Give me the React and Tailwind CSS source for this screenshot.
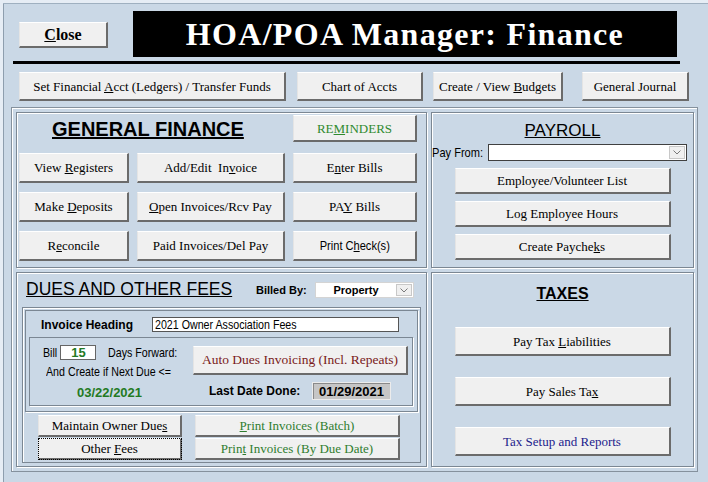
import React from "react";

const serif = "font-['Liberation_Serif','Times_New_Roman',serif]";
const sans = "font-['Liberation_Sans',Arial,sans-serif]";
const panel = "border border-[#7b8793] shadow-[inset_1px_1px_0_#fff,1px_1px_0_#fff]";

function U({ children }) {
  return <span className="underline">{children}</span>;
}

// Arial Narrow look: regular sans squeezed horizontally
function N({ className = "", children }) {
  return (
    <span className={`inline-block whitespace-nowrap scale-x-[0.82] ${className}`}>{children}</span>
  );
}

function Btn({ className = "", size = "text-[13px]", font = serif, children }) {
  return (
    <div
      className={`flex items-center justify-center whitespace-nowrap leading-none bg-[#f0f0f0] border-t border-l border-t-white border-l-[#e4e4e4] border-r-2 border-b-2 border-r-[#6b6b6b] border-b-[#6b6b6b] ${font} ${size} ${className}`}
    >
      <span>{children}</span>
    </div>
  );
}

function Select({ className = "", children }) {
  return (
    <div className={`flex shrink-0 bg-white border ${className}`}>
      <div className="flex-1 flex items-center justify-center leading-none">{children}</div>
      <div className="w-[16px] my-[1px] mr-[1px] flex items-center justify-center bg-[#f0f0f0] border border-[#c8c8c8]">
        <svg width="8" height="5" viewBox="0 0 8 5">
          <path d="M0.5 0.5 L4 4 L7.5 0.5" fill="none" stroke="#7a7a7a" strokeWidth="1" />
        </svg>
      </div>
    </div>
  );
}

export default function App() {
  return (
    <div className={`w-[708px] h-[482px] overflow-hidden bg-[#cad8e6] text-black ${sans} shadow-[inset_0_3px_0_#e6edf5,inset_3px_0_0_#e6edf5,inset_0_4px_0_#9fb0c0,inset_4px_0_0_#8e9eae]`}>
      {/* header */}
      <div className="flex items-start pt-[11px] pl-[19px]">
        <Btn className="mt-[11px] w-[89px] h-[26px] font-bold" size="text-[16px]">
          <U>C</U>lose
        </Btn>
        <div
          className={`ml-[25px] w-[544px] h-[46px] bg-black flex items-center justify-center text-white font-bold text-[32px] tracking-[1.3px] ${serif}`}
        >
          HOA/POA Manager: Finance
        </div>
      </div>
      <div className="ml-[13px] mt-[4px] w-[667px] h-[3px] bg-black" />

      <div className="flex mt-[8px] pl-[19px] h-[29px]">
        <Btn className="w-[267px]">
          Set Financial <U>A</U>cct (Ledgers) / Transfer Funds
        </Btn>
        <Btn className="ml-[11px] w-[126px]">Chart of Accts</Btn>
        <Btn className="ml-[10px] w-[130px]">
          Create / View <U>B</U>udgets
        </Btn>
        <Btn className="ml-[19px] w-[107px]">General Journal</Btn>
      </div>

      {/* main frame */}
      <div className="ml-[11px] mt-[6px] w-[687px] h-[365px] border border-[#85919d] shadow-[inset_1px_1px_0_#fff] pt-[4px] pl-[4px]">
        <div className="grid grid-cols-[411px_263px] grid-rows-[156px_195px] gap-[4px]">
          {/* general finance */}
          <div className={panel}>
            <div className="flex items-center mt-[2px] h-[27px]">
              <div className="ml-[35px] text-[20px] font-bold leading-none">
                <U>GENERAL FINANCE</U>
              </div>
              <Btn className="ml-auto mr-[9px] w-[124px] h-[27px] text-[#2f8a2f]">
                RE<U>M</U>INDERS
              </Btn>
            </div>
            <div className="grid grid-cols-[110px_148px_124px] grid-rows-[30px_30px_30px] gap-x-[8px] gap-y-[9px] mt-[11px] ml-[2px]">
              <Btn>
                View <U>R</U>egisters
              </Btn>
              <Btn>
                Add/Edit&nbsp; In<U>v</U>oice
              </Btn>
              <Btn>
                E<U>n</U>ter Bills
              </Btn>
              <Btn>
                Make <U>D</U>eposits
              </Btn>
              <Btn>
                <U>O</U>pen Invoices/Rcv Pay
              </Btn>
              <Btn>
                PA<U>Y</U> Bills
              </Btn>
              <Btn>
                R<U>e</U>concile
              </Btn>
              <Btn>Paid Invoices/Del Pay</Btn>
              <Btn font={sans} size="text-[13.5px]">
                <N className="origin-center">
                  Print C<U>h</U>eck(s)
                </N>
              </Btn>
            </div>
          </div>

          {/* payroll */}
          <div className={`${panel} flex flex-col`}>
            <div className="mt-[8px] text-center text-[17px] leading-[20px]">
              <U>PAYROLL</U>
            </div>
            <div className="flex items-center mt-[3px] h-[17px]">
              <span className="w-[50px] text-[13.5px] leading-none">
                <N className="origin-left">Pay From:</N>
              </span>
              <Select className="ml-auto mr-[6px] w-[199px] h-[17px] border-[#404040]" />
            </div>
            <div className="flex flex-col items-center gap-[7px] mt-[7px]">
              <Btn className="w-[216px] h-[26px]">Employee/Volunteer List</Btn>
              <Btn className="w-[216px] h-[26px]">Log Employee Hours</Btn>
              <Btn className="w-[216px] h-[26px]">
                Create Payche<U>k</U>s
              </Btn>
            </div>
          </div>

          {/* dues */}
          <div className={panel}>
            <div className="flex items-center mt-[9px] h-[16px] pl-[9px]">
              <span className="w-[230px] text-[17.5px] leading-none">
                <U>DUES AND OTHER FEES</U>
              </span>
              <span className="w-[59px] text-[11px] font-bold leading-none">Billed By:</span>
              <Select className="w-[99px] h-[16px] border-[#d4d4d4] text-[11px] font-bold">Property</Select>
            </div>
            <div className="ml-[5px] mt-[9px] w-[399px] h-[156px] border border-[#7b8793] shadow-[inset_1px_1px_0_#fff] p-[2px]">
              <div className="h-[102px] border border-[#7b8793] shadow-[1px_1px_0_#fff]">
                <div className="flex items-center mt-[6px] h-[15px] pl-[15px]">
                  <span className="w-[111px] text-[12px] font-bold leading-none">Invoice Heading</span>
                  <div className="w-[247px] h-[15px] bg-white border border-[#555] text-[13px] leading-[13px] pl-[2px] overflow-hidden">
                    <N className="origin-left">2021 Owner Association Fees</N>
                  </div>
                </div>
                <div className="ml-[3px] mt-[5px] w-[384px] h-[69px] border border-[#7b8793] shadow-[1px_1px_0_#fff] flex">
                  <div className="w-[163px] pt-[7px]">
                    <div className="flex items-center h-[15px] text-[13px] leading-none">
                      <span className="ml-[13px] w-[21px]">
                        <N className="origin-left">Bill</N>
                      </span>
                      <div className="w-[44px] h-[15px] bg-white border border-[#666] flex items-center justify-center font-bold text-[13px] text-[#237a23]">
                        15
                      </div>
                      <span className="ml-[12px]">
                        <N className="origin-left">Days Forward:</N>
                      </span>
                    </div>
                    <div className="mt-[5px] pl-[16px] text-[13px] leading-[14px]">
                      <N className="origin-left">And Create if Next Due &lt;=</N>
                    </div>
                    <div className="mt-[6px] pl-[47px] text-[13px] font-bold leading-[15px] text-[#237a23]">
                      03/22/2021
                    </div>
                  </div>
                  <div className="pt-[8px]">
                    <Btn className="w-[215px] h-[29px] text-[#7a1a1a]" size="text-[13.5px]">
                      Auto Dues Invoicing (Incl. Repeats)
                    </Btn>
                    <div className="flex items-center mt-[7px] h-[18px] pl-[16px]">
                      <span className="w-[103px] text-[12px] font-bold leading-none">Last Date Done:</span>
                      <div className="w-[79px] h-[18px] bg-[#c6c6c6] border border-[#ececec] shadow-[inset_1px_1px_0_#8a8a8a] flex items-center justify-center text-[13px] font-bold leading-none">
                        01/29/2021
                      </div>
                    </div>
                  </div>
                </div>
              </div>

              <div className="flex mt-[3px] pl-[13px]">
                <div className="flex flex-col gap-[1px]">
                  <Btn className="w-[144px] h-[22px]">
                    Maintain Owner Due<U>s</U>
                  </Btn>
                  <Btn className="w-[144px] h-[22px] outline-1 outline-dotted outline-black -outline-offset-1">
                    Other <U>F</U>ees
                  </Btn>
                </div>
                <div className="flex flex-col gap-[1px] ml-[13px]">
                  <Btn className="w-[205px] h-[22px] text-[#2f7d2f]">
                    <U>P</U>rint Invoices (Batch)
                  </Btn>
                  <Btn className="w-[205px] h-[22px] text-[#2f7d2f]">
                    Prin<U>t</U> Invoices (By Due Date)
                  </Btn>
                </div>
              </div>
            </div>
          </div>

          {/* taxes */}
          <div className={`${panel} flex flex-col items-center`}>
            <div className="mt-[11px] text-[16px] font-bold leading-[20px]">
              <U>TAXES</U>
            </div>
            <div className="flex flex-col gap-[21px] mt-[23px]">
              <Btn className="w-[216px] h-[29px]">
                Pay Tax <U>L</U>iabilities
              </Btn>
              <Btn className="w-[216px] h-[29px]">
                Pay Sales Ta<U>x</U>
              </Btn>
              <Btn className="w-[216px] h-[29px] text-[#1c1c8c]">Tax Setup and Reports</Btn>
            </div>
          </div>
        </div>
      </div>
    </div>
  );
}
